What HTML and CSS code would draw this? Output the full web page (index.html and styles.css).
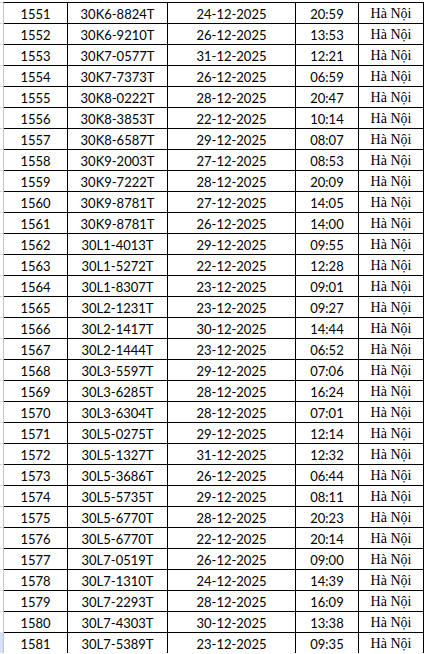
FILE: index.html
```html
<!DOCTYPE html>
<html lang="vi">
<head>
<meta charset="utf-8">
<title>Danh sách</title>
<link rel="stylesheet" href="styles.css">
</head>
<body>
<div class="sheet">
  <div class="row row--first"><span class="gutter"></span><span class="cell c1">1551</span><span class="cell">30K6-8824T</span><span class="cell">24-12-2025</span><span class="cell">20:59</span><span class="cell city">Hà Nội</span></div>
  <div class="row"><span class="gutter"></span><span class="cell c1">1552</span><span class="cell">30K6-9210T</span><span class="cell">26-12-2025</span><span class="cell">13:53</span><span class="cell city">Hà Nội</span></div>
  <div class="row"><span class="gutter"></span><span class="cell c1">1553</span><span class="cell">30K7-0577T</span><span class="cell">31-12-2025</span><span class="cell">12:21</span><span class="cell city">Hà Nội</span></div>
  <div class="row"><span class="gutter"></span><span class="cell c1">1554</span><span class="cell">30K7-7373T</span><span class="cell">26-12-2025</span><span class="cell">06:59</span><span class="cell city">Hà Nội</span></div>
  <div class="row"><span class="gutter"></span><span class="cell c1">1555</span><span class="cell">30K8-0222T</span><span class="cell">28-12-2025</span><span class="cell">20:47</span><span class="cell city">Hà Nội</span></div>
  <div class="row"><span class="gutter"></span><span class="cell c1">1556</span><span class="cell">30K8-3853T</span><span class="cell">22-12-2025</span><span class="cell">10:14</span><span class="cell city">Hà Nội</span></div>
  <div class="row"><span class="gutter"></span><span class="cell c1">1557</span><span class="cell">30K8-6587T</span><span class="cell">29-12-2025</span><span class="cell">08:07</span><span class="cell city">Hà Nội</span></div>
  <div class="row"><span class="gutter"></span><span class="cell c1">1558</span><span class="cell">30K9-2003T</span><span class="cell">27-12-2025</span><span class="cell">08:53</span><span class="cell city">Hà Nội</span></div>
  <div class="row"><span class="gutter"></span><span class="cell c1">1559</span><span class="cell">30K9-7222T</span><span class="cell">28-12-2025</span><span class="cell">20:09</span><span class="cell city">Hà Nội</span></div>
  <div class="row"><span class="gutter"></span><span class="cell c1">1560</span><span class="cell">30K9-8781T</span><span class="cell">27-12-2025</span><span class="cell">14:05</span><span class="cell city">Hà Nội</span></div>
  <div class="row"><span class="gutter"></span><span class="cell c1">1561</span><span class="cell">30K9-8781T</span><span class="cell">26-12-2025</span><span class="cell">14:00</span><span class="cell city">Hà Nội</span></div>
  <div class="row"><span class="gutter"></span><span class="cell c1">1562</span><span class="cell">30L1-4013T</span><span class="cell">29-12-2025</span><span class="cell">09:55</span><span class="cell city">Hà Nội</span></div>
  <div class="row"><span class="gutter"></span><span class="cell c1">1563</span><span class="cell">30L1-5272T</span><span class="cell">22-12-2025</span><span class="cell">12:28</span><span class="cell city">Hà Nội</span></div>
  <div class="row"><span class="gutter"></span><span class="cell c1">1564</span><span class="cell">30L1-8307T</span><span class="cell">23-12-2025</span><span class="cell">09:01</span><span class="cell city">Hà Nội</span></div>
  <div class="row"><span class="gutter"></span><span class="cell c1">1565</span><span class="cell">30L2-1231T</span><span class="cell">23-12-2025</span><span class="cell">09:27</span><span class="cell city">Hà Nội</span></div>
  <div class="row"><span class="gutter"></span><span class="cell c1">1566</span><span class="cell">30L2-1417T</span><span class="cell">30-12-2025</span><span class="cell">14:44</span><span class="cell city">Hà Nội</span></div>
  <div class="row"><span class="gutter"></span><span class="cell c1">1567</span><span class="cell">30L2-1444T</span><span class="cell">23-12-2025</span><span class="cell">06:52</span><span class="cell city">Hà Nội</span></div>
  <div class="row"><span class="gutter"></span><span class="cell c1">1568</span><span class="cell">30L3-5597T</span><span class="cell">29-12-2025</span><span class="cell">07:06</span><span class="cell city">Hà Nội</span></div>
  <div class="row"><span class="gutter"></span><span class="cell c1">1569</span><span class="cell">30L3-6285T</span><span class="cell">28-12-2025</span><span class="cell">16:24</span><span class="cell city">Hà Nội</span></div>
  <div class="row"><span class="gutter"></span><span class="cell c1">1570</span><span class="cell">30L3-6304T</span><span class="cell">28-12-2025</span><span class="cell">07:01</span><span class="cell city">Hà Nội</span></div>
  <div class="row"><span class="gutter"></span><span class="cell c1">1571</span><span class="cell">30L5-0275T</span><span class="cell">29-12-2025</span><span class="cell">12:14</span><span class="cell city">Hà Nội</span></div>
  <div class="row"><span class="gutter"></span><span class="cell c1">1572</span><span class="cell">30L5-1327T</span><span class="cell">31-12-2025</span><span class="cell">12:32</span><span class="cell city">Hà Nội</span></div>
  <div class="row"><span class="gutter"></span><span class="cell c1">1573</span><span class="cell">30L5-3686T</span><span class="cell">26-12-2025</span><span class="cell">06:44</span><span class="cell city">Hà Nội</span></div>
  <div class="row"><span class="gutter"></span><span class="cell c1">1574</span><span class="cell">30L5-5735T</span><span class="cell">29-12-2025</span><span class="cell">08:11</span><span class="cell city">Hà Nội</span></div>
  <div class="row"><span class="gutter"></span><span class="cell c1">1575</span><span class="cell">30L5-6770T</span><span class="cell">28-12-2025</span><span class="cell">20:23</span><span class="cell city">Hà Nội</span></div>
  <div class="row"><span class="gutter"></span><span class="cell c1">1576</span><span class="cell">30L5-6770T</span><span class="cell">22-12-2025</span><span class="cell">20:14</span><span class="cell city">Hà Nội</span></div>
  <div class="row"><span class="gutter"></span><span class="cell c1">1577</span><span class="cell">30L7-0519T</span><span class="cell">26-12-2025</span><span class="cell">09:00</span><span class="cell city">Hà Nội</span></div>
  <div class="row"><span class="gutter"></span><span class="cell c1">1578</span><span class="cell">30L7-1310T</span><span class="cell">24-12-2025</span><span class="cell">14:39</span><span class="cell city">Hà Nội</span></div>
  <div class="row"><span class="gutter"></span><span class="cell c1">1579</span><span class="cell">30L7-2293T</span><span class="cell">28-12-2025</span><span class="cell">16:09</span><span class="cell city">Hà Nội</span></div>
  <div class="row"><span class="gutter"></span><span class="cell c1">1580</span><span class="cell">30L7-4303T</span><span class="cell">30-12-2025</span><span class="cell">13:38</span><span class="cell city">Hà Nội</span></div>
  <div class="row row--selected"><span class="gutter"></span><span class="cell c1">1581</span><span class="cell">30L7-5389T</span><span class="cell">23-12-2025</span><span class="cell">09:35</span><span class="cell city">Hà Nội</span></div>
</div>
</body>
</html>
```

FILE: styles.css
```css
html, body {
  margin: 0;
  padding: 0;
  background: #ffffff;
}

body {
  padding-top: 2px;
  font-family: Lato, "Liberation Sans", sans-serif;
  font-size: 13px;
  color: #000000;
}

.sheet {
  display: flex;
  flex-direction: column;
  width: max-content;
}

.row {
  display: grid;
  grid-template-columns: 3px 65px 100px 128px 63px 65px;
  height: 21px;
}

.row--first .cell {
  border-top: 1px solid #000000;
  padding-top: 2px;
}

.gutter {
  border-bottom: 1px solid #d4d4d4;
}

.row--first .gutter {
  border-top: 1px solid #d4d4d4;
}

.row--selected .gutter {
  background: #d3e2f6;
  border-bottom-color: #d3e2f6;
}

.cell {
  box-sizing: border-box;
  border-right: 1px solid #000000;
  border-bottom: 1px solid #000000;
  text-align: center;
  padding-top: 3px;
  line-height: 18px;
  white-space: nowrap;
}

.c1 {
  border-left: 1px solid #c6c6c6;
}

.city {
  font-family: "Liberation Serif", "Times New Roman", serif;
  font-size: 14px;
}
```
